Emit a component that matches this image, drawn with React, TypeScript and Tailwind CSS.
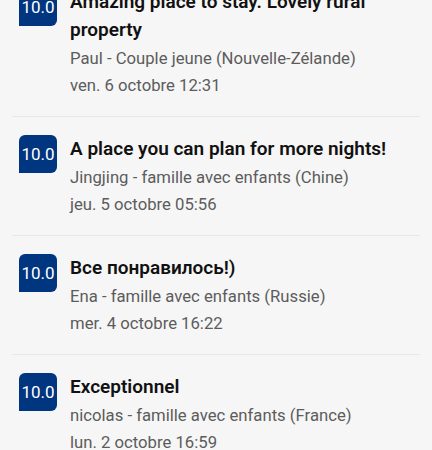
import React from "react";

interface Review {
  score: string;
  title: string;
  author: string;
  date: string;
}

const reviews: Review[] = [
  {
    score: "10.0",
    title: "Amazing place to stay. Lovely rural property",
    author: "Paul - Couple jeune (Nouvelle-Zélande)",
    date: "ven. 6 octobre 12:31",
  },
  {
    score: "10.0",
    title: "A place you can plan for more nights!",
    author: "Jingjing - famille avec enfants (Chine)",
    date: "jeu. 5 octobre 05:56",
  },
  {
    score: "10.0",
    title: "Все понравилось!)",
    author: "Ena - famille avec enfants (Russie)",
    date: "mer. 4 octobre 16:22",
  },
  {
    score: "10.0",
    title: "Exceptionnel",
    author: "nicolas - famille avec enfants (France)",
    date: "lun. 2 octobre 16:59",
  },
];

const ReviewRow: React.FC<{ review: Review }> = ({ review }) => {
  return (
    <div className="flex gap-[13px] pl-[19px] pr-3 pt-[18px] pb-[18px]">
      <div className="flex h-[38px] w-[38px] shrink-0 items-center justify-center rounded-t-[6px] rounded-br-[6px] bg-[#003580] pt-px text-[17px] text-white">
        {review.score}
      </div>
      <div className="flex min-w-0 flex-col">
        <p className="text-[19px] font-semibold leading-[28px] text-[#111111]">
          {review.title}
        </p>
        <p className="mt-[3px] text-[16.7px] leading-[24px] text-[#5c5c5c]">
          {review.author}
        </p>
        <p className="mt-[3px] text-[16.7px] leading-[24px] text-[#5c5c5c]">
          {review.date}
        </p>
      </div>
    </div>
  );
};

export default function App() {
  return (
    <div className="h-[450px] w-[432px] overflow-hidden bg-[#f6f6f6] font-['Roboto','Noto_Sans',sans-serif]">
      <div className="-mt-[30px] flex flex-col">
        {reviews.map((review, i) => (
          <div key={i}>
            {i > 0 && <div className="mx-3 h-px bg-[#e8e8e8]" />}
            <ReviewRow review={review} />
          </div>
        ))}
      </div>
    </div>
  );
}
